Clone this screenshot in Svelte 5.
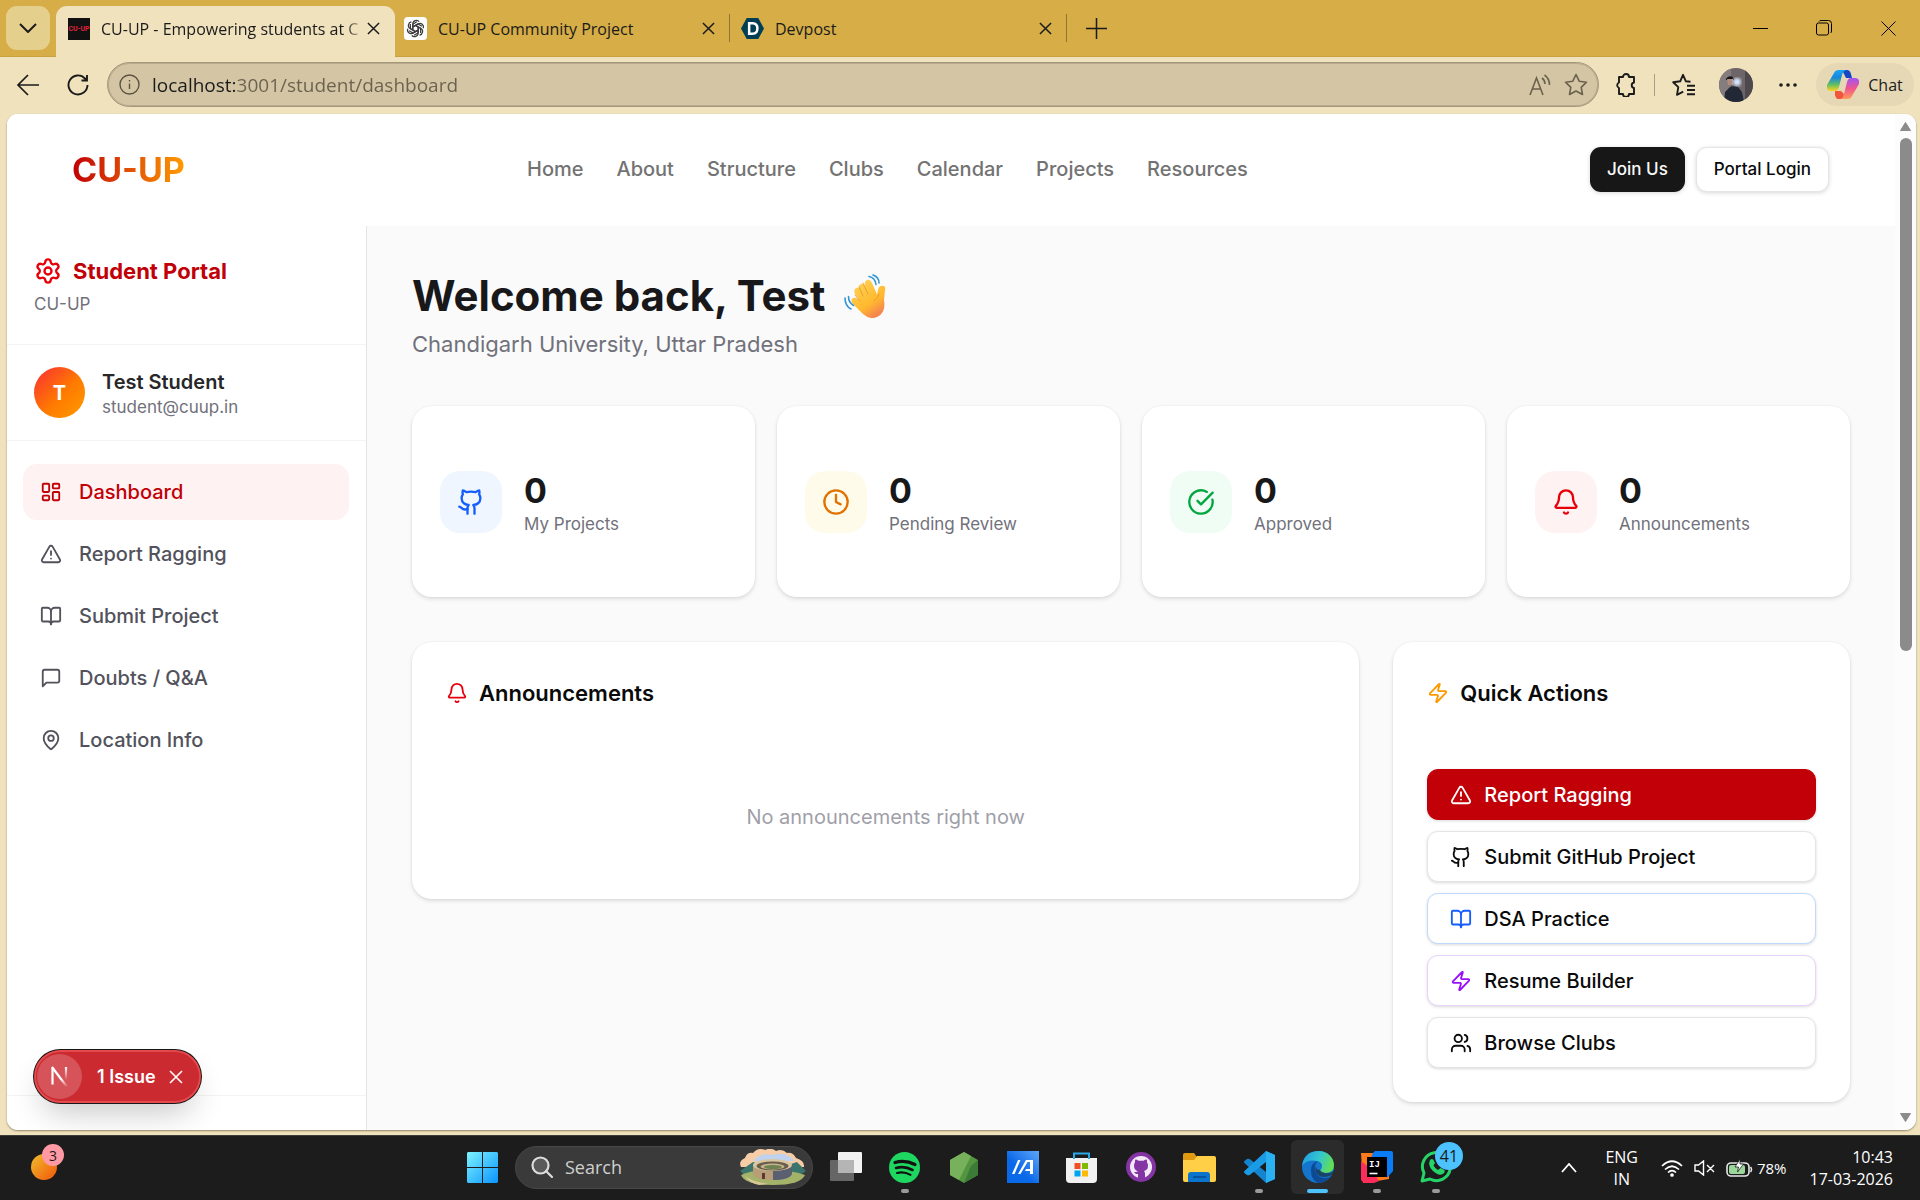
<script lang="ts">
  const icons: Record<string, string[]> = {
    settings: [
      'M9.671 4.136a2.34 2.34 0 0 1 4.659 0 2.34 2.34 0 0 0 3.319 1.915 2.34 2.34 0 0 1 2.33 4.033 2.34 2.34 0 0 0 0 3.831 2.34 2.34 0 0 1-2.33 4.033 2.34 2.34 0 0 0-3.319 1.915 2.34 2.34 0 0 1-4.659 0 2.34 2.34 0 0 0-3.32-1.915 2.34 2.34 0 0 1-2.33-4.033 2.34 2.34 0 0 0 0-3.831A2.34 2.34 0 0 1 6.35 6.051a2.34 2.34 0 0 0 3.319-1.915',
      'M12 9a3 3 0 1 1 0 6 3 3 0 0 1 0-6',
    ],
    dashboard: [
      'M4 3h5a1 1 0 0 1 1 1v7a1 1 0 0 1-1 1H4a1 1 0 0 1-1-1V4a1 1 0 0 1 1-1z',
      'M15 3h5a1 1 0 0 1 1 1v3a1 1 0 0 1-1 1h-5a1 1 0 0 1-1-1V4a1 1 0 0 1 1-1z',
      'M15 12h5a1 1 0 0 1 1 1v7a1 1 0 0 1-1 1h-5a1 1 0 0 1-1-1v-7a1 1 0 0 1 1-1z',
      'M4 16h5a1 1 0 0 1 1 1v3a1 1 0 0 1-1 1H4a1 1 0 0 1-1-1v-3a1 1 0 0 1 1-1z',
    ],
    alert: ['m21.73 18-8-14a2 2 0 0 0-3.48 0l-8 14A2 2 0 0 0 4 21h16a2 2 0 0 0 1.73-3', 'M12 9v4', 'M12 17h.01'],
    book: [
      'M12 7v14',
      'M3 18a1 1 0 0 1-1-1V4a1 1 0 0 1 1-1h5a4 4 0 0 1 4 4 4 4 0 0 1 4-4h5a1 1 0 0 1 1 1v13a1 1 0 0 1-1 1h-6a3 3 0 0 0-3 3 3 3 0 0 0-3-3z',
    ],
    message: ['M21 15a2 2 0 0 1-2 2H7l-4 4V5a2 2 0 0 1 2-2h14a2 2 0 0 1 2 2z'],
    pin: [
      'M20 10c0 4.993-5.539 10.193-7.399 11.799a1 1 0 0 1-1.202 0C9.539 20.193 4 14.993 4 10a8 8 0 0 1 16 0',
      'M12 7a3 3 0 1 1 0 6 3 3 0 0 1 0-6',
    ],
    github: [
      'M15 22v-4a4.8 4.8 0 0 0-1-3.5c3 0 6-2 6-5.5.08-1.25-.27-2.48-1-3.5.28-1.15.28-2.35 0-3.5 0 0-1 0-3 1.5-2.64-.5-5.36-.5-8 0C6 2 5 2 5 2c-.3 1.15-.3 2.35 0 3.5A5.403 5.403 0 0 0 4 9c0 3.5 3 5.5 6 5.5-.39.49-.68 1.05-.85 1.65-.17.6-.22 1.23-.15 1.85v4',
      'M9 18c-4.51 2-5-2-7-2',
    ],
    clock: ['M12 2a10 10 0 1 1 0 20 10 10 0 0 1 0-20', 'M12 6v6l4 2'],
    check: ['M21.801 10A10 10 0 1 1 17 3.335', 'm9 11 3 3L22 4'],
    bell: [
      'M10.268 21a2 2 0 0 0 3.464 0',
      'M3.262 15.326A1 1 0 0 0 4 17h16a1 1 0 0 0 .74-1.673C19.41 13.956 18 12.499 18 8A6 6 0 0 0 6 8c0 4.499-1.411 5.956-2.738 7.326',
    ],
    zap: [
      'M4 14a1 1 0 0 1-.78-1.63l9.9-10.2a.5.5 0 0 1 .86.46l-1.92 6.02A1 1 0 0 0 13 10h7a1 1 0 0 1 .78 1.63l-9.9 10.2a.5.5 0 0 1-.86-.46l1.92-6.02A1 1 0 0 0 11 14z',
    ],
    users: [
      'M16 21v-2a4 4 0 0 0-4-4H6a4 4 0 0 0-4 4v2',
      'M16 3.128a4 4 0 0 1 0 7.744',
      'M22 21v-2a4 4 0 0 0-3-3.87',
      'M9 3a4 4 0 1 1 0 8 4 4 0 0 1 0-8',
    ],
  };

  const links = ['Home', 'About', 'Structure', 'Clubs', 'Calendar', 'Projects', 'Resources'];

  const menu = [
    { label: 'Dashboard', icon: 'dashboard', active: true },
    { label: 'Report Ragging', icon: 'alert', active: false },
    { label: 'Submit Project', icon: 'book', active: false },
    { label: 'Doubts / Q&A', icon: 'message', active: false },
    { label: 'Location Info', icon: 'pin', active: false },
  ];

  const stats = [
    { label: 'My Projects', value: 0, icon: 'github', tone: 'blue' },
    { label: 'Pending Review', value: 0, icon: 'clock', tone: 'amber' },
    { label: 'Approved', value: 0, icon: 'check', tone: 'green' },
    { label: 'Announcements', value: 0, icon: 'bell', tone: 'red' },
  ];

  const actions = [
    { label: 'Report Ragging', icon: 'alert', tone: 'danger' },
    { label: 'Submit GitHub Project', icon: 'github', tone: 'plain' },
    { label: 'DSA Practice', icon: 'book', tone: 'practice' },
    { label: 'Resume Builder', icon: 'zap', tone: 'resume' },
    { label: 'Browse Clubs', icon: 'users', tone: 'plain' },
  ];

  let address = $state('localhost:3001/student/dashboard');
</script>

{#snippet icon(name: string, size: number)}
  <svg class="line-icon" width={size} height={size} viewBox="0 0 24 24" aria-hidden="true">
    {#each icons[name] as d}<path {d} />{/each}
  </svg>
{/snippet}

{#snippet cross(size: number)}
  <svg width={size} height={size} viewBox="0 0 14 14" fill="none" stroke="currentColor" stroke-width="1.6" aria-hidden="true">
    <path d="M1 1l12 12M13 1L1 13" />
  </svg>
{/snippet}

<div class="screen">
  <div class="browser">
    <div class="tabbar">
      <button class="tab-search" aria-label="Search tabs">
        <svg width="18" height="10" viewBox="0 0 18 10" fill="none" stroke="#1b1b1b" stroke-width="2"><path d="M1 1l8 8 8-8" /></svg>
      </button>
      <div class="tabs">
        <div class="tab active">
          <span class="fav fav-cu">CU-UP</span>
          <span class="tab-title fade">CU-UP - Empowering students at C</span>
          <button class="tab-close" aria-label="Close tab">{@render cross(13)}</button>
        </div>
        <div class="tab">
          <svg class="fav" width="23" height="23" viewBox="0 0 24 24" aria-hidden="true">
            <rect width="24" height="24" rx="4" fill="#fff" />
            <g fill="none" stroke="#3a3a3a" stroke-width="1.3" stroke-linejoin="round">
              {#each [0, 60, 120, 180, 240, 300] as a}
                <path transform="rotate({a} 12 12)" d="M9.2 13.5V7.2a3.7 3.7 0 0 1 6.6-2.3M9.2 10.3l5.3-3 4.3 2.4" />
              {/each}
            </g>
          </svg>
          <span class="tab-title">CU-UP Community Project</span>
          <button class="tab-close" aria-label="Close tab">{@render cross(13)}</button>
        </div>
        <div class="tab last">
          <svg class="fav" width="23" height="23" viewBox="0 0 24 24" aria-hidden="true">
            <path d="M6 1h12l6 11-6 11H6L0 12z" fill="#003e54" />
            <path d="M8.5 6.5h3.6c3.6 0 5 2.4 5 5.5s-1.6 5.5-5 5.5H8.5z" fill="none" stroke="#fff" stroke-width="2.6" />
          </svg>
          <span class="tab-title">Devpost</span>
          <button class="tab-close" aria-label="Close tab">{@render cross(13)}</button>
        </div>
      </div>
      <button class="new-tab" aria-label="New tab">
        <svg width="21" height="21" viewBox="0 0 21 21" stroke="#1b1b1b" stroke-width="1.5"><path d="M10.5 0v21M0 10.5h21" /></svg>
      </button>
      <div class="window-controls">
        <button aria-label="Minimize"><svg width="15" height="15" viewBox="0 0 15 15" stroke="#000"><path d="M0 7.5h15" /></svg></button>
        <button aria-label="Restore">
          <svg width="16" height="16" viewBox="0 0 16 16" fill="none" stroke="#000"><rect x=".5" y="3" width="12" height="12" rx="2" /><path d="M3 1.5C3.5.7 4 .5 5 .5h7.5a3 3 0 0 1 3 3V11c0 1-.3 1.5-1 2" /></svg>
        </button>
        <button aria-label="Close"><svg width="15" height="15" viewBox="0 0 15 15" stroke="#000"><path d="M.5.5l14 14M14.5.5l-14 14" /></svg></button>
      </div>
    </div>

    <div class="toolbar">
      <button class="tool" aria-label="Back">
        <svg width="24" height="22" viewBox="0 0 24 22" fill="none" stroke="#1b1b1b" stroke-width="1.7"><path d="M23 11H2M12 1L2 11l10 10" /></svg>
      </button>
      <button class="tool" aria-label="Refresh">
        <svg width="22" height="22" viewBox="0 0 22 22" fill="none" stroke="#1b1b1b" stroke-width="1.9"><path d="M20.5 11A9.5 9.5 0 1 1 18 4.500l2 2M20 1v5.500h-5.500" /></svg>
      </button>
      <label class="address">
        <svg width="21" height="21" viewBox="0 0 21 21" fill="none" stroke="#5c5443" stroke-width="1.4"><circle cx="10.5" cy="10.5" r="9.5" /><path d="M10.5 9.5v5.5M10.5 6v1.6" /></svg>
        <input type="text" aria-label="Address" bind:value={address} />
        <svg width="23" height="22" viewBox="0 0 23 22" fill="none" stroke="#6a614e" stroke-width="1.6"><path d="M1 21L7.5 4 14 21M3.5 15h8M13 4c2 1.5 3 3.500 3 6M15.5 1C19 3.500 20.500 7 20.500 11" /></svg>
        <svg width="24" height="23" viewBox="0 0 24 23" fill="none" stroke="#6a614e" stroke-width="1.6" stroke-linejoin="round"><path d="M12 1.5l3.2 6.700 7.300 1-5.300 5.100 1.300 7.200L12 18l-6.500 3.500 1.300-7.200L1.500 9.200l7.300-1z" /></svg>
      </label>
      <div class="tools-right">
        <button class="tool" aria-label="Extensions">
          <svg width="23" height="24" viewBox="0 0 23 24" fill="none" stroke="#1b1b1b" stroke-width="1.9" stroke-linejoin="round"><path d="M5 4h4a3 3 0 0 1 6 0h5v5.500a2.800 2.800 0 0 0 0 5.500v6h-5a3 3 0 0 1-6 0H5v-6a3 3 0 0 1 0-5.500z" /></svg>
        </button>
        <span class="tool-divider"></span>
        <button class="tool" aria-label="Favorites">
          <svg width="24" height="24" viewBox="0 0 24 24" fill="none" stroke="#1b1b1b" stroke-width="1.9" stroke-linejoin="round"><path d="M18.5 8.800l-4.600-.5L11 1.800 8.200 8.300l-7 .9 5.100 4.900L5 21.800l6.200-3.200M15 12.800h8M15 17h8M15 21.200h8" /></svg>
        </button>
        <button class="tool" aria-label="Profile">
          <svg width="34" height="34" viewBox="0 0 34 34">
            <defs><clipPath id="face"><circle cx="17" cy="17" r="17" /></clipPath><filter id="glow"><feGaussianBlur stdDeviation="1.4" /></filter></defs>
            <g clip-path="url(#face)">
              <rect width="34" height="34" fill="#6d6567" /><rect width="12" height="34" fill="#857c7d" /><rect x="26" width="8" height="34" fill="#4d484c" />
              <path d="M5 34l1-10 5-5q4-2 8 0l4 5 2 10z" fill="#222836" /><path d="M7 11q2-4 7-2l1 3H7z" fill="#15151a" />
              <path d="M8 11h6v6H9z" fill="#b08c7f" /><circle cx="18" cy="14" r="4" fill="#d5e5ff" filter="url(#glow)" />
            </g>
          </svg>
        </button>
        <button class="tool" aria-label="Settings and more">
          <svg width="18" height="4" viewBox="0 0 18 4" fill="#1b1b1b"><circle cx="2" cy="2" r="1.8" /><circle cx="9" cy="2" r="1.8" /><circle cx="16" cy="2" r="1.8" /></svg>
        </button>
        <button class="chat">
          <svg width="32" height="29" viewBox="0 0 32 29" aria-hidden="true">
            <defs>
              <linearGradient id="cpa" x1="0" y1="0" x2="0" y2="1"><stop offset="0" stop-color="#16a6f5" /><stop offset=".35" stop-color="#1686dd" /><stop offset=".7" stop-color="#63bf62" /><stop offset="1" stop-color="#ffd21c" /></linearGradient>
              <linearGradient id="cpb" x1="0" y1="0" x2="0" y2="1"><stop offset="0" stop-color="#a153f5" /><stop offset=".5" stop-color="#f0568e" /><stop offset="1" stop-color="#ff9a5a" /></linearGradient>
            </defs>
            <path d="M14 0h6q3 0 4 4l1 4h-6l-4-8z" fill="#1547c4" />
            <path d="M7 3q1-3 5-3h7q-3 1-4 5l-3 12q-1 4-4 4H4q-5 0-4-6z" fill="url(#cpa)" />
            <path d="M25 26q-1 3-5 3h-7q3-1 4-5l3-12q1-4 4-4h4q5 0 4 6z" fill="url(#cpb)" />
            <path d="M8 21h6l3 3q-1 5-4 5h-2q-2 0-3-4z" fill="#f2553c" />
          </svg>
          Chat
        </button>
      </div>
    </div>

    <div class="viewport">
      <div class="page">
        <header class="site-header">
          <a class="logo" href="#home">CU-UP</a>
          <nav class="links">
            {#each links as link}<a href="#{link.toLowerCase()}">{link}</a>{/each}
          </nav>
          <div class="auth">
            <button class="btn-dark">Join Us</button>
            <button class="btn-light">Portal Login</button>
          </div>
        </header>

        <div class="body">
          <aside>
            <div class="portal">
              <div class="portal-title">{@render icon('settings', 28)}<span>Student Portal</span></div>
              <div class="portal-sub">CU-UP</div>
            </div>
            <div class="user">
              <span class="avatar">T</span>
              <div>
                <div class="user-name">Test Student</div>
                <div class="user-mail">student@cuup.in</div>
              </div>
            </div>
            <nav class="menu">
              {#each menu as item}
                <a href="#{item.icon}" class:active={item.active}>{@render icon(item.icon, 22)}{item.label}</a>
              {/each}
            </nav>
            <div class="aside-foot"></div>
          </aside>

          <main>
            <h1>
              Welcome back, Test
              <svg class="wave" width="43" height="44" viewBox="0 0 43 44" role="img" aria-label="waving hand">
                <defs><linearGradient id="hand" x1="0" y1="0" x2=".6" y2="1"><stop offset="0" stop-color="#ffd65c" /><stop offset=".7" stop-color="#ffb92e" /><stop offset="1" stop-color="#f5854f" /></linearGradient></defs>
                <path d="M15 19L11 11q-1-4 2-5 3-1 5 3l2 4-3-6q-1-4 2-5 3-1 5 3l4 9 1 3 1-5q1-5 6-4 2 1 1 4l-1 10q2 11-5 16-8 5-16-2L5 26q-3-4 0-6 2-1 5 1l2 2-5-7q-2-4 1-6 3-1 5 2z" transform="translate(5 4)" fill="url(#hand)" />
                <path d="M20 22l-4-9M25 20l-5-11M17 27l-5-6M36 20q-1 5-5 7" fill="none" stroke="#e8942c" stroke-width="1" stroke-linecap="round" opacity=".8" />
                <g fill="none" stroke="#3496d3" stroke-width="1.6" stroke-linecap="round"><path d="M26 2.5q6 1 7 8M30 1q6 2 6 8M2 24q0 8 6 11M5.500 22.500q0 6 5 9" /></g>
              </svg>
            </h1>
            <p class="lead">Chandigarh University, Uttar Pradesh</p>

            <section class="stats">
              {#each stats as stat}
                <div class="card stat">
                  <span class="stat-icon {stat.tone}">{@render icon(stat.icon, 28)}</span>
                  <div>
                    <div class="stat-value">{stat.value}</div>
                    <div class="stat-label">{stat.label}</div>
                  </div>
                </div>
              {/each}
            </section>

            <section class="panels">
              <div class="card panel wide">
                <h2 class="red-icon">{@render icon('bell', 22)}Announcements</h2>
                <p class="empty">No announcements right now</p>
              </div>
              <div class="card panel">
                <h2 class="orange-icon">{@render icon('zap', 22)}Quick Actions</h2>
                <div class="actions">
                  {#each actions as action}
                    <button class={action.tone}>{@render icon(action.icon, 22)}{action.label}</button>
                  {/each}
                </div>
              </div>
            </section>
          </main>
        </div>

        <div class="issue">
          <span class="issue-mark">
            <svg width="20" height="22" viewBox="0 0 20 22" fill="none" stroke-width="2.2">
              <defs>
                <linearGradient id="nd" x1="0" y1="0" x2="0" y2="1"><stop offset=".6" stop-color="#fff" /><stop offset="1" stop-color="#fff" stop-opacity="0" /></linearGradient>
                <linearGradient id="nv" gradientUnits="userSpaceOnUse" x1="0" y1="1" x2="0" y2="14"><stop offset="0" stop-color="#fff" /><stop offset="1" stop-color="#fff" stop-opacity="0" /></linearGradient>
              </defs>
              <path d="M2.5 18.500V1.500" stroke="#fff" /><path d="M2 1l15 20" stroke="url(#nd)" /><path d="M16 1v13" stroke="url(#nv)" />
            </svg>
          </span>
          <button class="issue-text">1 Issue</button>
          <button class="issue-close" aria-label="Dismiss">{@render cross(14)}</button>
        </div>
      </div>

      <div class="scrollbar">
        <svg width="11" height="9" viewBox="0 0 11 9"><path d="M5.5.5L10.500 8.500H.5z" fill="#8b8b8b" stroke="#8b8b8b" stroke-linejoin="round" /></svg>
        <div class="track"><div class="thumb"></div></div>
        <svg width="11" height="9" viewBox="0 0 11 9"><path d="M5.5 8.500L10.500.5H.5z" fill="#8b8b8b" stroke="#8b8b8b" stroke-linejoin="round" /></svg>
      </div>
    </div>
  </div>

  <footer class="taskbar">
    <div class="widget">
      <svg width="26" height="26" viewBox="0 0 26 26"><defs><linearGradient id="sun" x1="0" y1="0" x2="1" y2="1"><stop offset=".1" stop-color="#f0b429" /><stop offset=".8" stop-color="#f26a10" /></linearGradient></defs><circle cx="13" cy="13" r="13" fill="url(#sun)" /></svg>
      <span class="badge pink">3</span>
    </div>

    <div class="apps">
      <button class="app" aria-label="Start">
        <svg width="31" height="31" viewBox="0 0 31 31"><defs><linearGradient id="win" gradientUnits="userSpaceOnUse" x1="0" y1="0" x2="31" y2="31"><stop offset="0" stop-color="#7df3ff" /><stop offset="1" stop-color="#0a94ff" /></linearGradient></defs><path d="M1 0h14v15H0V1zM16 0h14l1 1v14H16zM0 16h15v15H1l-1-1zM16 16h15v14l-1 1H16z" fill="url(#win)" /></svg>
      </button>
      <label class="search">
        <svg width="22" height="22" viewBox="0 0 22 22" fill="#5a5a5a" stroke="#dcdcdc" stroke-width="2.2"><circle cx="9.5" cy="9.5" r="8" /><path d="M15 15l6 6" stroke-linecap="round" /></svg>
        <input type="text" placeholder="Search" aria-label="Search" />
        <svg width="68" height="36" viewBox="0 0 68 36" aria-hidden="true">
          <path d="M2 18q-3-6 4-9 2-6 8-5 5-6 12-3 6-3 11 1 6-3 11 2 6-1 9 5 9 3 8 9z" fill="#f6cda6" /><path d="M14 12q8-9 20-6 12-4 22 6z" fill="#bfd3f0" />
          <path d="M1 22l13-9 14 4h18l12-4 9 9-9 6H8z" fill="#3b756b" /><path d="M2 26q10-5 30-5t34 5q-4 10-32 10T2 26z" fill="#a3b36a" /><path d="M6 27q8 6 24 8l-10 1q-10-2-14-9z" fill="#d9c795" />
          <path d="M14 16h39v9q-3 6-19.5 6T14 25z" fill="#b79d78" /><path d="M34 16h19v9q-3 6-19 6z" fill="#5b6070" />
          <ellipse cx="33.5" cy="16" rx="19.5" ry="6" fill="#d9c7a3" /><ellipse cx="33.5" cy="17" rx="16" ry="4.5" fill="#6b5e4c" /><ellipse cx="33.5" cy="17.5" rx="12" ry="3" fill="#c7b48c" /><ellipse cx="34" cy="18" rx="9" ry="2" fill="#6d8151" />
          <path d="M23 24h3v6h-3z" fill="#5b3b2e" />
        </svg>
      </label>
      <button class="app" aria-label="Task view">
        <svg width="32" height="30" viewBox="0 0 32 30"><rect x="8" width="24" height="21" rx="1" fill="#f2f2f2" /><rect y="8" width="24" height="21" rx="1" fill="#666" /><rect x="8" y="8" width="16" height="13" fill="#b5b5b5" /></svg>
      </button>
      <button class="app running" aria-label="Spotify">
        <svg width="31" height="31" viewBox="0 0 31 31"><circle cx="15.5" cy="15.5" r="15.5" fill="#1ed760" /><g fill="none" stroke="#121212" stroke-linecap="round"><path d="M6 10.5q10-3 20 2" stroke-width="3.2" /><path d="M7 16q8.5-2.500 16.500 2" stroke-width="2.6" /><path d="M8 21q7-1.800 13.500 1.800" stroke-width="2.1" /></g></svg>
      </button>
      <button class="app" aria-label="Node.js">
        <svg width="28" height="31" viewBox="0 0 28 31"><path d="M14 0l14 8v15l-14 8L0 23V8z" fill="#54953f" /><path d="M14 0L0 8v15l9 5L21 4z" fill="#77b15b" /><path d="M14 31l14-8V8l-7 6z" fill="#3c7a38" /></svg>
      </button>
      <button class="app" aria-label="MyASUS">
        <svg width="32" height="32" viewBox="0 0 32 32"><defs><linearGradient id="asus" x1="0" y1="1" x2="1" y2="0"><stop offset=".4" stop-color="#0a69e8" /><stop offset="1" stop-color="#5fa5f8" /></linearGradient></defs><rect width="32" height="32" fill="url(#asus)" /><path d="M5 23l6-14h2.500L7.500 23zM11 23l8-14h7v14h-3V11h-2.500l-7 12zM19 18h4v2h-5z" fill="#fff" /></svg>
      </button>
      <button class="app" aria-label="Microsoft Store">
        <svg width="31" height="31" viewBox="0 0 31 31"><path d="M0 6h31v21q0 4-4 4H4q-4 0-4-4z" fill="#f1f1f1" /><path d="M8 7V1.5h15V7" fill="none" stroke="#2aa8e8" stroke-width="2" /><path d="M8.5 11h6v6h-6z" fill="#f25022" /><path d="M16 11h6v6h-6z" fill="#7fba00" /><path d="M8.5 18.500h6v6h-6z" fill="#00a4ef" /><path d="M16 18.500h6v6h-6z" fill="#ffb900" /></svg>
      </button>
      <button class="app" aria-label="GitHub Desktop">
        <svg width="30" height="30" viewBox="0 0 30 30"><circle cx="15" cy="15" r="15" fill="#8534a3" /><circle cx="15" cy="15" r="11" fill="#f2e9f6" /><path d="M12 26v-4q-3 .5-4-2 2 0 4-.5Q8 18 8 13.500q0-2 1-3-.3-2 .4-3 1.600 0 3.100 1.200h5Q19 7.500 20.600 7.500q.7 1 .4 3 1 1 1 3 0 4.500-4 5.500 1 1 1 2.500V26z" fill="#8534a3" /></svg>
      </button>
      <button class="app" aria-label="File Explorer">
        <svg width="33" height="29" viewBox="0 0 33 29"><path d="M0 2q0-2 2-2h9l3 4-3 4H0z" fill="#e09a12" /><path d="M0 7h11l3-4h17q2 0 2 2v22q0 2-2 2H2q-2 0-2-2z" fill="#ffcf48" /><path d="M5 29v-7q0-3 3-3h16q3 0 3 3v7z" fill="#0b74cc" /><path d="M10 24h13" stroke="#064a8c" stroke-width="1.5" /></svg>
      </button>
      <button class="app running" aria-label="Visual Studio Code">
        <svg width="32" height="32" viewBox="0 0 32 32"><path d="M23 0l9 4v24l-9 4L2 12.5q-2-1.500 0-3L4 8q1.500-.8 3 .3L23 21z" fill="#1584cf" /><path d="M23 0L2 19.500q-2 1.500 0 3L4 24q1.500.8 3-.3L23 11z" fill="#1a9be6" /><path d="M23 0l9 4v24l-9 4z" fill="#2bb0f2" /></svg>
      </button>
      <button class="app current" aria-label="Microsoft Edge">
        <svg width="32" height="32" viewBox="0 0 32 32"><defs><linearGradient id="edg" x1="0" y1=".3" x2="1" y2=".6"><stop offset="0" stop-color="#1f9fe4" /><stop offset=".5" stop-color="#35c6cf" /><stop offset="1" stop-color="#66e04a" /></linearGradient></defs><circle cx="16" cy="16" r="16" fill="#1574cc" /><path d="M0 15Q2 0 17 0c9 0 15 7 15 14q0 8-9 8-5 0-5-3 2-1 2-4 0-4-5-5Q5 8 0 15z" fill="url(#edg)" /><path d="M9 19q0-7 7-9-4 3-3 9 2 8 10 8 4 0 6-2-5 7-13 7Q9 29 9 19z" fill="#0d4a93" /><path d="M18 19q-4 0-4-4-2 5 2 9 5 4 14 0l2-4q-5 3-9 2t-5-3z" fill="#1c1c1c" opacity=".55" /></svg>
      </button>
      <button class="app running" aria-label="IntelliJ IDEA">
        <svg width="32" height="32" viewBox="0 0 32 32"><path d="M0 2l12 0-2 20 18 0v6l-12 2-14 2z" fill="#ff7a1a" /><path d="M0 10l10 8 8 12-5 2H3l-3-3z" fill="#fb2d5b" /><path d="M12 2l2-2h16q2 0 2 2v18l-6 7V7H10z" fill="#0a7cf5" /><rect x="6" y="6" width="20" height="20" fill="#000" /><text x="8" y="16" font-family="Liberation Mono, monospace" font-weight="700" font-size="9" fill="#fff">IJ</text><path d="M8.5 22.500h8" stroke="#fff" stroke-width="1.6" /></svg>
      </button>
      <button class="app running" aria-label="WhatsApp">
        <svg width="32" height="32" viewBox="0 0 32 32"><path d="M2 30l2-8A14 14 0 1 1 10 28z" fill="none" stroke="#25d366" stroke-width="3" stroke-linejoin="round" /><path d="M10 9q2-2 3.500 0l1.500 3-1.500 2.500q1.500 3 4.500 4.500l2.500-2 4 2q1 3-3 4.500-4 1-9-4t-2.500-10.500z" fill="#25d366" /></svg>
        <span class="badge count">41</span>
      </button>
    </div>

    <div class="tray">
      <button aria-label="Show hidden icons"><svg width="16" height="10" viewBox="0 0 16 10" fill="none" stroke="#fff" stroke-width="1.8"><path d="M1 9l7-8 7 8" /></svg></button>
      <button class="lang"><span>ENG</span><span>IN</span></button>
      <button class="status" aria-label="Network, volume and battery">
        <svg width="22" height="17" viewBox="0 0 22 17" fill="none" stroke="#fff" stroke-width="1.7"><path d="M1 6q10-9.500 20 0M4 9.500q7-6.500 14 0M7 12.500q4-4 8 0" /><circle cx="11" cy="15" r="1" fill="#fff" /></svg>
        <svg width="21" height="16" viewBox="0 0 21 16" fill="none" stroke="#fff" stroke-width="1.4"><path d="M1 5h3.500L9.500 1v14l-5-4H1zM13 5l7 7M20 5l-7 7" /></svg>
        <span class="battery">
          <svg width="27" height="19" viewBox="0 0 27 19"><rect x="1" y="4" width="22" height="13" rx="4" fill="none" stroke="#e8e8e8" stroke-width="1.6" /><rect x="3" y="6" width="16" height="9" rx="2" fill="#9bd69a" /><path d="M24.5 8q2 2.500 0 5" stroke="#e8e8e8" stroke-width="1.5" fill="none" /><path d="M14 0l-5 8h3.500L11.500 13l6-8H14z" fill="#fff" stroke="#1c1c1c" stroke-width=".8" /></svg>
          78%
        </span>
      </button>
      <button class="clock"><span>10:43</span><span>17-03-2026</span></button>
    </div>
  </footer>
</div>

<style>
  :global(body) { margin: 0; background: #f0e2bd; }
  .screen {
    display: flex; flex-direction: column; height: 100vh; overflow: hidden;
    font-family: 'Open Sans', 'Noto Sans', sans-serif; color: #1b1b1b;
  }
  .screen :global(*) { box-sizing: border-box; }
  button { border: 0; padding: 0; background: none; color: inherit; font: inherit; display: flex; align-items: center; justify-content: center; }
  input { border: 0; padding: 0; background: none; color: inherit; font: inherit; outline: 0; flex: 1; min-width: 0; }
  a { color: inherit; text-decoration: none; }
  svg { display: block; flex: none; }
  .line-icon { fill: none; stroke: currentColor; stroke-width: 2; stroke-linecap: round; stroke-linejoin: round; }

  .browser { flex: 1; min-height: 0; display: flex; flex-direction: column; background: #f0e2bd; }
  .tabbar { display: flex; height: 57px; flex: none; background: #d6ad46; padding: 6px 0 0 6px; border-bottom: 1px solid #c9a140; }
  .tab-search { width: 44px; height: 44px; border-radius: 11px; background: #e5cf8d; margin-right: 6px; }
  .tabs { display: flex; margin-bottom: -1px; }
  .tab { position: relative; display: flex; align-items: center; width: 337px; padding: 0 14px 6px 11px; font-size: 16px; }
  .tab.active { width: 339px; background: #f0e2bd; border-radius: 11px 11px 0 0; padding-left: 12px; margin-right: -2px; }
  .tab:not(.active)::after { content: ''; position: absolute; right: 0; top: 8px; height: 28px; width: 1px; background: #8f7636; }
  .fav { width: 23px; height: 23px; margin-right: 11px; flex: none; }
  .fav-cu { width: 22px; height: 22px; background: #111; color: #e0213b; font: 700 7px/22px Roboto, sans-serif; display: flex; justify-content: center; }
  .tab-title { flex: 1; min-width: 0; overflow: hidden; white-space: nowrap; }
  .fade { mask-image: linear-gradient(90deg, #000 calc(100% - 20px), transparent); }
  .tab-close { width: 16px; height: 24px; }
  .new-tab { width: 58px; height: 44px; }
  .window-controls { display: flex; margin-left: auto; height: 44px; }
  .window-controls button { width: 64px; }

  .toolbar { display: flex; align-items: center; height: 57px; flex: none; padding: 0 6px 2px 3px; }
  .tool { width: 50px; height: 44px; flex: none; }
  .address {
    flex: 1; display: flex; align-items: center; gap: 12px; height: 45px; padding: 0 10px 0 11px; margin-left: 4px;
    border: 1px solid #a3987d; border-radius: 23px; background: #d4c6a4; font-size: 19px;
    box-shadow: 0 0 0 1px #b9ac8c inset;
  }
  .address input { background: linear-gradient(90deg, #1b1b1b 83px, #6a614e 83px); background-clip: text; color: transparent; height: 30px; }
  .tools-right { display: flex; align-items: center; }
  .tools-right .tool { width: 52px; }
  .tool-divider { width: 1px; height: 22px; margin: 0 3px; background: #a99f84; }
  .chat { width: 98px; height: 43px; border-radius: 22px; background: #e6d8b4; gap: 9px; font-size: 16px; margin-left: 2px; }

  .viewport {
    flex: 1; min-height: 0; display: flex; margin: 0 4px 5px 7px; overflow: hidden;
    background: #fafafa; border-radius: 11px; box-shadow: 0 1px 2px #8f8568;
  }
  .page { position: relative; flex: 1; min-width: 0; display: flex; flex-direction: column; font-family: Inter, sans-serif; font-size: 20px; line-height: 28px; }
  .site-header { display: flex; align-items: center; justify-content: space-between; height: 112px; flex: none; padding: 0 66px 2px 65px; background: #fff; }
  .logo { font-size: 34px; line-height: 45px; font-weight: 700; background: linear-gradient(90deg, #c10007, #ff9d00); background-clip: text; color: transparent; }
  .links { display: flex; gap: 33px; font-weight: 500; color: #737373; }
  .auth { display: flex; gap: 11px; font-size: 17px; font-weight: 500; }
  .auth button { height: 45px; padding: 0 17px; border-radius: 11px; box-shadow: 0 1px 4px rgba(0, 0, 0, .16); }
  .auth .btn-dark { background: #171717; color: #fafafa; }
  .auth .btn-light { background: #fff; color: #0a0a0a; border: 1px solid #e5e5e5; }

  .body { flex: 1; min-height: 0; display: flex; }
  aside { width: 360px; flex: none; display: flex; flex-direction: column; background: #fff; border-right: 1px solid #e4e4e7; }
  .portal { padding: 28px 27px 29px; border-bottom: 1px solid #f4f4f5; }
  .portal-title { display: flex; align-items: center; gap: 11px; color: #e7000b; margin-bottom: 5px; }
  .portal-title span { font-size: 22px; line-height: 34px; font-weight: 700; color: #c10007; }
  .portal-sub, .user-mail, .stat-label { font-size: 17px; line-height: 22px; color: #71717b; }
  .user { display: flex; align-items: center; gap: 17px; padding: 22px 27px; border-bottom: 1px solid #f4f4f5; }
  .avatar { width: 51px; height: 51px; border-radius: 50%; background: linear-gradient(135deg, #fb2c36, #ff7a00 55%, #ff9d00); color: #fff; font-weight: 700; display: flex; align-items: center; justify-content: center; }
  .user-name { font-weight: 600; color: #27272a; }
  .menu { display: flex; flex-direction: column; gap: 6px; padding: 23px 17px 0 16px; font-weight: 500; color: #52525c; }
  .menu a { display: flex; align-items: center; gap: 17px; height: 56px; padding: 0 17px; border-radius: 14px; }
  .menu .active { background: #fef2f2; color: #c10007; }
  .aside-foot { margin-top: auto; height: 35px; border-top: 1px solid #f4f4f5; }

  main { flex: 1; min-width: 0; padding: 45px; }
  h1 { display: flex; align-items: center; gap: 18px; margin: 0; font-size: 42px; line-height: 50px; font-weight: 700; color: #18181b; }
  .lead { margin: 6px 0 45px; font-size: 22px; line-height: 34px; color: #71717b; }
  .card { background: #fff; border-radius: 20px; box-shadow: 0 0 0 1px rgba(0, 0, 0, .02), 0 2px 4px rgba(0, 0, 0, .12); }
  .stats { display: grid; grid-template-columns: repeat(4, 1fr); gap: 22px; }
  .stat { display: flex; align-items: center; gap: 22px; padding: 62px 28px; }
  .stat-icon { width: 62px; height: 62px; border-radius: 20px; display: flex; align-items: center; justify-content: center; }
  .blue { background: #eff6ff; color: #155dfc; }
  .amber { background: #fffbeb; color: #e17100; }
  .green { background: #f0fdf4; color: #00a63e; }
  .red { background: #fef2f2; color: #e7000b; }
  .stat-value { font-size: 34px; line-height: 45px; font-weight: 700; color: #18181b; }
  .panels { display: grid; grid-template-columns: repeat(3, 1fr); gap: 34px; margin-top: 45px; align-items: start; }
  .panel { padding: 34px; color: #0a0a0a; }
  .wide { grid-column: span 2; }
  h2 { display: flex; align-items: center; gap: 11px; margin: 0 0 59px; font-size: 22px; line-height: 34px; font-weight: 600; }
  .red-icon :global(svg) { color: #e7000b; }
  .orange-icon :global(svg) { color: #fe9a00; }
  .empty { margin: 0; padding: 34px 0; text-align: center; color: #9f9fa9; }
  .actions { display: flex; flex-direction: column; gap: 11px; font-weight: 500; }
  .actions button { justify-content: flex-start; gap: 12px; height: 51px; padding: 0 22px; border: 1px solid #e5e5e5; border-radius: 11px; background: #fff; box-shadow: 0 1px 3px rgba(0, 0, 0, .15); }
  .actions .danger { background: #c10007; border-color: #c10007; color: #fff; }
  .actions .practice { border-color: #bedbff; }
  .practice :global(svg) { color: #155dfc; }
  .actions .resume { border-color: #e9d4ff; }
  .resume :global(svg) { color: #9810fa; }

  .issue {
    position: absolute; left: 27px; bottom: 27px; display: flex; align-items: center; height: 53px; padding: 0 16px 0 1px;
    border-radius: 27px; background: #ca2a30; border: 2px solid #e5484d; color: #fff; font-size: 18px; font-weight: 600;
    box-shadow: 0 0 0 1px #171717, 0 16px 32px -8px rgba(0, 0, 0, .24);
  }
  .issue-mark { width: 45px; height: 45px; border-radius: 50%; background: #d65359; display: flex; align-items: center; justify-content: center; margin-right: 15px; }
  .issue-close { margin-left: 13px; }

  .scrollbar { width: 21px; flex: none; display: flex; flex-direction: column; align-items: center; padding: 8px 0; background: #fcfcfc; }
  .track { flex: 1; padding: 7px 0; display: flex; }
  .thumb { width: 12px; height: 53%; border-radius: 6px; background: #8b8b8b; }

  .taskbar { display: grid; grid-template-columns: 1fr auto 1fr; height: 65px; flex: none; background: #1c1c1c; border-top: 1px solid #3c3c38; color: #fff; font-size: 16px; }
  .widget { position: relative; padding: 18px 0 0 31px; }
  .badge { position: absolute; display: flex; align-items: center; justify-content: center; border-radius: 50%; color: #1b1b1b; }
  .pink { left: 42px; top: 8px; width: 22px; height: 22px; background: #ff99a4; font-size: 14px; }
  .count { left: 26px; top: 2px; width: 28px; height: 28px; background: #4cc2ff; font-size: 16px; }
  .apps { display: flex; align-items: center; gap: 6px; padding: 0 2px 2px 0; }
  .app { position: relative; width: 53px; height: 54px; border-radius: 6px; }
  .running::after, .current::after { content: ''; position: absolute; bottom: 1px; width: 8px; height: 4px; border-radius: 2px; background: #9a9a9a; }
  .current { background: #2b2b2b; }
  .current::after { width: 21px; background: #4cc2ff; }
  .search { display: flex; align-items: center; gap: 12px; width: 298px; height: 43px; padding: 0 5px 0 15px; border-radius: 22px; background: #3a3a3a; border: 1px solid #484848; font-size: 18px; }
  .search input::placeholder { color: #cfcfcf; opacity: 1; }
  .tray { display: flex; align-items: center; justify-content: flex-end; padding-right: 27px; line-height: 22px; font-size: 16px; }
  .lang, .clock { flex-direction: column; }
  .lang { margin: 0 23px 0 28px; }
  .status { gap: 11px; margin-right: 23px; }
  .battery { display: flex; align-items: center; gap: 4px; font-size: 15px; }
  .clock { align-items: flex-end; }
</style>
